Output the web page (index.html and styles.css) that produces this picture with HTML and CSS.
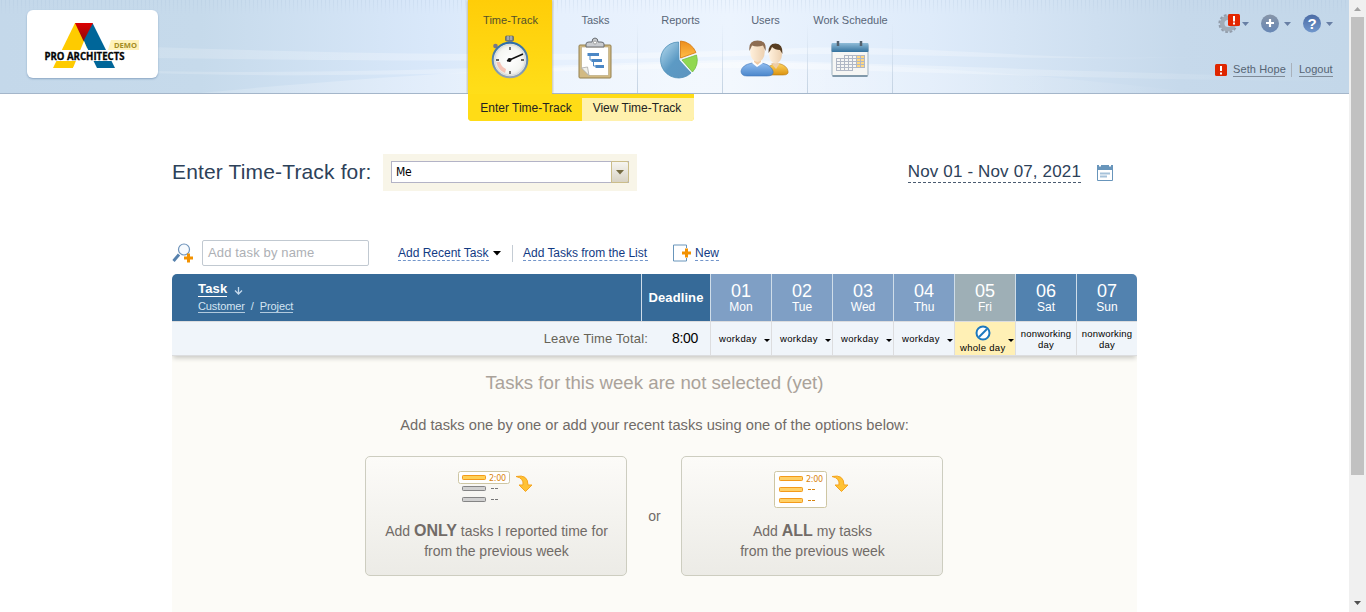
FILE: index.html
```html
<!DOCTYPE html>
<html lang="en">
<head>
<meta charset="utf-8">
<title>Enter Time-Track</title>
<link rel="stylesheet" href="styles.css">
</head>
<body>
<div class="window">
<div class="page">
  <header class="top">
    <svg class="waves" width="1349" height="93" viewBox="0 0 1349 93" preserveAspectRatio="none">
      <defs>
        <linearGradient id="glow"><stop offset="0" stop-color="#fff" stop-opacity=".15"/><stop offset=".5" stop-color="#fff" stop-opacity=".4"/><stop offset="1" stop-color="#fff" stop-opacity="0"/></linearGradient>
        <pattern id="pin" width="4" height="14" patternUnits="userSpaceOnUse"><path d="M1.500 0v14" stroke="#9fb9d6" stroke-opacity=".2"/></pattern>
        <linearGradient id="pinfade" x2="0" y2="1"><stop offset="0" stop-color="#fff"/><stop offset="1" stop-color="#000"/></linearGradient>
        <mask id="pm"><rect width="1349" height="14" fill="url(#pinfade)"/></mask>
      </defs>
      <rect width="1349" height="14" fill="url(#pin)" mask="url(#pm)"/>
      <path d="M150 47C350 54 560 58 800 48C960 44 1080 70 1310 50C1120 66 980 54 800 54C540 64 330 60 150 58Z" fill="url(#glow)"/>
      <path d="M150 71C380 76 600 62 740 60C900 64 1080 72 1349 78V81C1080 80 900 70 740 68C590 68 380 80 150 73Z" fill="url(#glow)"/>
      <path d="M200 93C380 76 540 66 740 62C900 64 1040 74 1200 93Z" fill="url(#glow)"/>
    </svg>
    <div class="logo">
      <svg width="131" height="68" viewBox="0 0 131 68">
        <defs><linearGradient id="red" x2="0" y2="1"><stop offset="0" stop-color="#d00"/><stop offset="1" stop-color="#8b0b0b"/></linearGradient></defs>
        <path d="M48 13H57L65.500 30L46 58H26Z" fill="#fecb00"/>
        <path d="M56 29.500L65.500 13L88 58H70Z" fill="#006699"/>
        <path d="M48 13H66L56.500 31Z" fill="url(#red)"/>
        <path d="M57 31L68 58H46Z" fill="#fff"/>
        <rect x="16" y="40" width="100" height="11" fill="#fff"/>
        <path d="M84 30H112V40H81Z" fill="#fff2ba"/>
        <text x="87" y="38" class="logo-demo" textLength="23" lengthAdjust="spacingAndGlyphs">DEMO</text>
        <text x="17.500" y="49.500" class="logo-name" textLength="80" lengthAdjust="spacingAndGlyphs">PRO ARCHITECTS</text>
      </svg>
    </div>
    <nav class="nav">
      <a class="nav-item active"><span>Time-Track</span>
        <svg width="44" height="48" viewBox="0 0 44 48">
          <defs><radialGradient id="face"><stop offset="0" stop-color="#fff"/><stop offset=".7" stop-color="#f5f6f3"/><stop offset="1" stop-color="#dcded8"/></radialGradient>
          <linearGradient id="rim" x2="0" y2="1"><stop offset="0" stop-color="#2e6da8"/><stop offset="1" stop-color="#91a2b3"/></linearGradient></defs>
          <rect x="19.500" y="6" width="5" height="6" fill="#888f96"/><rect x="17.500" y="3" width="8" height="5" rx="1" fill="#7c848c" stroke="#565e66" stroke-width=".7"/><path d="M20 3v4M23 3v4" stroke="#c8cdd1"/>
          <circle cx="7.500" cy="13" r="2.300" fill="#778"/><path d="M8 14l3 3" stroke="#777" stroke-width="2"/>
          <circle cx="22" cy="27" r="17.300" fill="url(#face)" stroke="url(#rim)" stroke-width="2"/>
          <circle cx="22" cy="27" r="15.500" fill="none" stroke="#d7dadc" stroke-width="1"/>
          <path d="M8.500 29A14 14 0 0 0 17 40L18 36A10 10 0 0 1 12 29Z" fill="#f5c3b5"/>
          <path d="M22 14v3M22 38v3M8 27h3M33 27h3" stroke="#333" stroke-width="1.300"/>
          <path d="M19 28L35 21" stroke="#111" stroke-width="1.600"/><circle cx="21.500" cy="27" r="2" fill="#111"/>
        </svg></a>
      <a class="nav-item"><span>Tasks</span>
        <svg width="44" height="48" viewBox="0 0 44 48">
          <rect x="6" y="12" width="32" height="33" rx="1" fill="#d2ba83" stroke="#94804f"/>
          <path d="M8.500 14H35.500V42.500H16L8.500 35Z" fill="#fff" stroke="#b4a375" stroke-width=".6"/><path d="M8.500 35L14.500 34L16 42.500Z" fill="#f1f1eb" stroke="#aaa" stroke-width=".8"/>
          <path d="M13 14v-3q0-2 3-2h3q0-4 3-4t3 4h3q3 0 3 2v3Z" fill="#c9ccd0" stroke="#686d73" stroke-width="1"/><circle cx="22" cy="9.500" r="1.500" fill="#fff" stroke="#777" stroke-width=".6"/>
          <path d="M14.500 21.500H26M18.500 27.500H29M22.500 33.500H31" stroke="#4b87c5" stroke-width="3"/><path d="M17 22v5h3M20.500 28v5h3" stroke="#4b87c5" fill="none"/>
        </svg></a>
      <a class="nav-item"><span>Reports</span>
        <svg width="44" height="48" viewBox="0 0 44 48">
          <defs><linearGradient id="pb" x2="1" y2="1"><stop offset="0" stop-color="#b8dcef"/><stop offset=".5" stop-color="#5c9ac4"/><stop offset="1" stop-color="#5d94bf"/></linearGradient><linearGradient id="po" x2="0" y2="1"><stop offset="0" stop-color="#ed8e1d"/><stop offset="1" stop-color="#ffbd47"/></linearGradient></defs>
          <path d="M20.500 9A18 18 0 1 0 33 40L21 27Z" fill="url(#pb)" stroke="#4f8fb8" stroke-width=".8"/>
          <path d="M22.500 8A18 18 0 0 1 38 19.500L22.500 25Z" fill="url(#po)" stroke="#d37509" stroke-width=".8"/>
          <path d="M24 27L38.500 22A18 18 0 0 1 34.500 39Z" fill="#91d850" stroke="#74bd40" stroke-width=".8"/>
        </svg></a>
      <a class="nav-item"><span>Users</span>
        <svg width="50" height="48" viewBox="0 0 50 48">
          <defs><linearGradient id="ub" x2="0" y2="1"><stop offset="0" stop-color="#91bdf0"/><stop offset="1" stop-color="#4a86cb"/></linearGradient><linearGradient id="uy" x2="0" y2="1"><stop offset="0" stop-color="#ffd360"/><stop offset="1" stop-color="#db930f"/></linearGradient><linearGradient id="skin"><stop offset="0" stop-color="#fff0dc"/><stop offset="1" stop-color="#ecd0b0"/></linearGradient></defs>
          <path d="M28 42V34q4-2 6-3.500h5q8 2 9 7.500q1 4-5 4H28Z" fill="url(#uy)" stroke="#b77a13" stroke-width=".6"/>
          <path d="M31 30l5 6 4-6Z" fill="#edcda8"/>
          <ellipse cx="35.500" cy="21" rx="6.500" ry="9.500" fill="url(#skin)"/>
          <path d="M28.500 20Q28 10.500 35.500 10.500Q43 10.500 42.500 21L40 17Q35 17 32 14Q31 17 28.500 20Z" fill="#573d22"/>
          <path d="M1 38q1-6 11-8h10q9 2 11 8q1 5-6 5H7q-6 0-6-5Z" fill="url(#ub)" stroke="#3f76b8" stroke-width=".6"/>
          <path d="M12 30l2-3h7l2 3-6 4Z" fill="#fff"/><path d="M14 25v4l3.500 3 3.500-3v-4" fill="#f0cba5"/>
          <ellipse cx="17.500" cy="18.500" rx="7.300" ry="10.500" fill="url(#skin)"/>
          <path d="M9.500 18Q8 7.500 17.500 7.500Q27 7.500 25.500 18L23 12.500Q17 14.500 12 12.500Z" fill="#8d6d52"/>
        </svg></a>
      <a class="nav-item"><span>Work Schedule</span>
        <svg width="44" height="48" viewBox="0 0 44 48">
          <defs><linearGradient id="ch" x2="0" y2="1"><stop offset="0" stop-color="#8fbcd8"/><stop offset="1" stop-color="#34729e"/></linearGradient></defs>
          <rect x="4" y="11" width="36" height="32" rx="1.500" fill="#f6f6f4" stroke="#9fb1bf"/><rect x="3.500" y="10" width="37" height="9" rx="1" fill="url(#ch)"/><path d="M4.500 43H39.500" stroke="#8199aa" stroke-width="2"/>
          <path d="M10 8v5M33 8v5" stroke="#53616e" stroke-width="2.500"/>
          <rect x="28.500" y="22.500" width="8" height="12" fill="#ffd781"/>
          <path d="M16 22.500H36.500M8 25.500H36.500M8 28.500H36.500M8 31.500H36.500M8 34.500H36.500M8 37.500H24M8.500 26v12M12.500 26v12M16.500 22v16M20.500 22v16M24.500 22v16M28.500 22v13M32.500 22v13M36.500 22v13" fill="none" stroke="#b0b7c5"/>
        </svg></a>
    </nav>
    <div class="account">
      <div class="tools">
        <svg width="31" height="22" viewBox="0 0 31 22">
          <circle cx="10" cy="12.500" r="8.500" fill="none" stroke="#929caa" stroke-width="2.200" stroke-dasharray="2.700 1.750"/><circle cx="10" cy="12.500" r="5.800" fill="none" stroke="#a0abb7" stroke-width="4.500"/>
          <rect x="10" y="3" width="12" height="12" rx="1.500" fill="#e32600"/><path d="M16 5v5.500M16 11.500v2" stroke="#fff" stroke-width="2"/><path d="M24 11h7l-3.500 4Z" fill="#687fa5"/>
        </svg>
        <svg width="31" height="22" viewBox="0 0 31 22"><defs><linearGradient id="pl" x2="0" y2="1"><stop offset="0" stop-color="#8795a8"/><stop offset="1" stop-color="#6787b5"/></linearGradient></defs><circle cx="10" cy="12.500" r="9" fill="url(#pl)"/><path d="M10 8v8M6 12h8" stroke="#fff" stroke-width="2.200"/><path d="M24 11h7l-3.500 4Z" fill="#687fa5"/></svg>
        <svg width="31" height="22" viewBox="0 0 31 22"><defs><linearGradient id="hl" x2="0" y2="1"><stop offset="0" stop-color="#4c6ca5"/><stop offset="1" stop-color="#6f96cc"/></linearGradient></defs><circle cx="10" cy="12.500" r="9" fill="url(#hl)"/><text x="10" y="17.500" class="help">?</text><path d="M24 11h7l-3.500 4Z" fill="#687fa5"/></svg>
      </div>
      <div class="user">
        <svg width="12" height="12" viewBox="0 0 12 12"><rect width="12" height="12" rx="1.500" fill="#df2600"/><path d="M6 2v5M6 8.500v2" stroke="#fff" stroke-width="2"/></svg>
        <a class="u-name">Seth Hope</a><i class="u-sep"></i><a class="u-out">Logout</a>
      </div>
    </div>
  </header>
  <div class="subnav"><a class="sub on">Enter Time-Track</a><a class="sub">View Time-Track</a></div>

  <main class="content">
    <div class="title-row">
      <h1><span class="h1-text">Enter Time-Track for:</span></h1>
      <div class="who"><div class="combo"><span>Me</span><b><svg width="8" height="5" viewBox="0 0 8 5"><path d="M0 0h8L4 4.500Z" fill="#756b43"/></svg></b></div></div>
      <div class="range"><span class="dates">Nov 01 - Nov 07, 2021</span>
        <svg width="16" height="18" viewBox="0 0 16 18"><path d="M.5 2v14.500h15V2" fill="#fff" stroke="#6895bb"/><path d="M0 1h2v1.500h2V1h8v1.500h2V1h2v5H0Z" fill="#6895bb"/><path d="M3 9.500h10M3 12.500h7" stroke="#a6c2da" stroke-width="2"/></svg>
      </div>
    </div>

    <div class="toolbar">
      <svg width="21" height="20" viewBox="0 0 21 20"><path d="M1.500 18L7 11.500" stroke="#5681ad" stroke-width="3"/><circle cx="12" cy="6.500" r="5.500" fill="#f6fafe" stroke="#6e93ba" stroke-width="1.200"/><path d="M16.500 10.500v9M12 15h9" stroke="#f39200" stroke-width="3"/></svg>
      <div class="search">Add task by name</div>
      <a class="dash l1">Add Recent Task</a>
      <svg class="caret" width="8" height="5" viewBox="0 0 8 5"><path d="M0 0h8L4 4.500Z" fill="#000"/></svg>
      <i class="sep"></i>
      <a class="dash l2">Add Tasks from the List</a>
      <svg class="new-ico" width="19" height="18" viewBox="0 0 19 18"><path d="M13.500 4V1H.5v16h13v-3" fill="none" stroke="#6895bb"/><path d="M13.500 4.500v9M9 9h9" stroke="#f39200" stroke-width="3"/></svg>
      <a class="dash l3">New</a>
    </div>

    <section class="grid">
      <div class="hd task"><div class="t1"><b>Task</b><svg width="9" height="9" viewBox="0 0 9 9"><path d="M4.500 1v7M1 4.500L4.500 8L8 4.500" fill="none" stroke="#c5d9ec" stroke-width="1.300"/></svg></div><div class="t2"><u>Customer</u><i>/</i><u>Project</u></div></div>
      <div class="hd deadline"><span>Deadline</span></div>
      <div class="hd day"><b>01</b><span>Mon</span></div>
      <div class="hd day"><b>02</b><span>Tue</span></div>
      <div class="hd day"><b>03</b><span>Wed</span></div>
      <div class="hd day"><b>04</b><span>Thu</span></div>
      <div class="hd day fri"><b>05</b><span>Fri</span></div>
      <div class="hd day off"><b>06</b><span>Sat</span></div>
      <div class="hd day off last"><b>07</b><span>Sun</span></div>
      <div class="lv total">Leave Time Total:</div>
      <div class="lv hours">8:00</div>
      <div class="lv work"><span>workday</span><i></i></div>
      <div class="lv work"><span>workday</span><i></i></div>
      <div class="lv work"><span>workday</span><i></i></div>
      <div class="lv work"><span>workday</span><i></i></div>
      <div class="lv whole"><div><svg width="16" height="16" viewBox="0 0 16 16"><circle cx="8" cy="8" r="6.500" fill="#fff" stroke="#1c78be" stroke-width="2"/><path d="M4 12L12 4" stroke="#1c78be" stroke-width="2"/></svg><span>whole day</span></div><i></i></div>
      <div class="lv non"><span>nonworking</span><span>day</span></div>
      <div class="lv non"><span>nonworking</span><span>day</span></div>
    </section>

    <section class="empty">
      <h2><span>Tasks for this week are not selected (yet)</span></h2>
      <p class="hint"><span>Add tasks one by one or add your recent tasks using one of the options below:</span></p>
      <div class="options">
        <a class="card">
          <svg width="76" height="38" viewBox="0 0 76 38"><rect x=".5" y=".5" width="51" height="12" rx="2" fill="#fff" stroke="#cec6a3"/><rect x="4.500" y="4.500" width="23" height="4" rx=".8" fill="#ffd056" stroke="#f39a1a"/><g fill="#d0d0d0" stroke="#858585"><rect x="4.500" y="15.500" width="23" height="4" rx=".8"/><rect x="4.500" y="26.500" width="23" height="4" rx=".8"/></g><text x="31" y="9.500" class="mini" textLength="17">2:00</text><path d="M33 17.500h3m1 0h3M33 28.500h3m1 0h3" stroke="#777"/><path d="M58 5.500Q70 3 70 14H74L67.500 20.500L61 14H65Q66 7 58 5.500Z" fill="#ffc235" stroke="#f5a51f"/></svg>
          <div class="card-text"><span class="c1">Add <b>ONLY</b> tasks I reported time for</span><span class="c2">from the previous week</span></div>
        </a>
        <span class="or">or</span>
        <a class="card">
          <svg width="76" height="38" viewBox="0 0 76 38"><rect x=".5" y=".5" width="52" height="36" rx="2" fill="#fff" stroke="#cec6a3"/><g fill="#ffd066" stroke="#f39a1a"><rect x="5.500" y="5.500" width="23" height="4" rx=".8"/><rect x="5.500" y="16.500" width="23" height="4" rx=".8"/><rect x="5.500" y="27.500" width="23" height="4" rx=".8"/></g><text x="32" y="10.500" class="mini" textLength="17">2:00</text><path d="M34 18.500h3m1 0h3M34 29.500h3m1 0h3" stroke="#d98510"/><path d="M58 5.500Q70 3 70 14H74L67.500 20.500L61 14H65Q66 7 58 5.500Z" fill="#ffc235" stroke="#f5a51f"/></svg>
          <div class="card-text"><span class="c3">Add <b>ALL</b> my tasks</span><span class="c2">from the previous week</span></div>
        </a>
      </div>
    </section>
  </main>
</div>
<div class="scroll"><svg width="17" height="17" viewBox="0 0 17 17"><path d="M5 11h7L8.500 7Z" fill="#a3a3a3"/></svg><div class="thumb"></div><svg width="17" height="17" viewBox="0 0 17 17"><path d="M5 6h7L8.500 10Z" fill="#505050"/></svg></div>
</div>
</body>
</html>
```
FILE: styles.css
```css
* { box-sizing: border-box; }
body { margin: 0; background: #fff; font-family: "Liberation Sans", Arial, sans-serif; font-size: 12px; color: #000; overflow: hidden; }
h1, h2, p { margin: 0; font-weight: normal; }
i { font-style: normal; }
svg { display: block; flex: none; }
span { white-space: nowrap; }
.window { display: flex; width: 1366px; height: 612px; }
.page { width: 1349px; height: 612px; overflow: hidden; }

.top { position: relative; display: flex; height: 94px; border-bottom: 1px solid #a4b6ca; background: linear-gradient(90deg, #c4d8ea 0, #c6daeb 200px, #d9e8fa 430px, #e6f0fd 560px, #ecf4fe 730px, #deebfa 930px, #c6d9eb 1180px, #c3d7e9 100%); }
.waves { position: absolute; left: 0; top: 0; }
.logo { position: relative; width: 131px; height: 68px; margin: 10px 310px 0 27px; background: #fff; border-radius: 6px; box-shadow: 0 1px 2px #8ba6c3; }
.logo-name { font: bold 10.500px "Open Sans", sans-serif; fill: #050505; stroke: #050505; stroke-width: .3px; }
.logo-demo { font: bold 7px "Open Sans", sans-serif; fill: #a58d24; }
.nav { position: relative; display: flex; }
.nav-item { width: 85px; height: 93px; padding-top: 14px; display: flex; flex-direction: column; align-items: center; font-size: 11px; line-height: 13px; color: #596678; border-right: 1px solid; border-image: linear-gradient(transparent 25%, #c3d2e2) 1; }
.nav-item svg { margin-top: 6px; }
.nav-item span { padding-left: 1px; }
.nav-item.active { width: 84px; margin-right: 1px; height: 94px; border: 0; background: linear-gradient(#ffcd08, #ffde19); box-shadow: 0 0 3px #a59b72; clip-path: inset(0 -2px 0 -2px); color: #53502a; }
.account { position: relative; flex: 1; padding: 11px 16px 0 0; display: flex; flex-direction: column; align-items: flex-end; }
.tools { display: flex; gap: 11px; }
.help { font: bold 15px "Liberation Sans", sans-serif; fill: #fff; text-anchor: middle; }
.user { display: flex; align-items: center; margin-top: 30px; color: #566474; line-height: 13px; white-space: nowrap; }
.user a { height: 14px; border-bottom: 1px solid #7f8b98; font-size: 11px; }
.u-name { margin-left: 6px; width: 52px; letter-spacing: .1px; }
.u-sep { width: 1px; height: 14px; margin: 0 7px 0 6px; background: #a9b1bb; }
.u-out { width: 34px; }

.subnav { display: flex; width: 226px; height: 27px; margin-left: 468px; background: #ffdc16; border-radius: 0 0 4px 4px; overflow: hidden; }
.sub { flex: 1; margin-top: 4px; height: 23px; line-height: 20px; padding-right: 2px; text-align: center; background: #fff1ad; color: #222; }
.sub.on { flex: 0 0 114px; padding: 0 0 0 2px; background: #ffdc16; }

.content { width: 965px; margin-left: 172px; }
.title-row { display: flex; align-items: flex-start; padding-top: 33px; height: 119px; }
h1 { width: 211px; font-size: 21px; line-height: 35px; color: #2d4159; }
.h1-text { letter-spacing: .15px; }
.who { width: 254px; height: 37px; padding: 7px 8px; background: #f8f5e8; }
.combo { display: flex; height: 22px; border: 1px solid #b3b3c6; background: #fff; }
.combo span { flex: 1; padding-left: 4px; font: 12px/21px "DejaVu Sans Condensed", "DejaVu Sans", sans-serif; font-stretch: condensed; letter-spacing: -.2px; }
.combo b { width: 18px; margin: -1px; display: flex; align-items: center; justify-content: center; border: 1px solid #cbbd8a; border-radius: 0 2px 2px 0; background: linear-gradient(#f6f5f1, #d8d3c4); }
.range { margin-left: auto; padding: 8px 24px 0 0; display: flex; }
.dates { height: 21px; font-size: 17px; line-height: 20px; color: #2d4159; border-bottom: 1px dashed #4a5b70; letter-spacing: .15px; margin-right: 16px; }
.range svg { margin-top: 2px; }

.toolbar { display: flex; align-items: center; height: 26px; margin-bottom: 8px; }
.search { width: 167px; height: 26px; margin-left: 9px; border: 1px solid #c1c9d1; border-radius: 2px; padding-left: 5px; font-size: 13px; line-height: 24px; letter-spacing: .15px; color: #adb0b5; white-space: nowrap; }
.dash { color: #123a83; border-bottom: 1px dashed #7295ca; line-height: 16px; height: 16px; white-space: nowrap; }
.l1 { width: 91px; margin-left: 29px; }
.caret { margin: 1px 0 0 4px; }
.sep { width: 1px; height: 17px; margin: 0 10px 0 11px; background: #c4ccd4; }
.l2 { width: 125px; letter-spacing: -.02px; }
.new-ico { margin: 0 3px 0 25px; }

.grid { position: relative; display: grid; grid-template-columns: 469px 69px repeat(7, 61px); grid-template-rows: 47px 35px; border-radius: 5px 5px 0 0; box-shadow: 0 3px 5px -1px #c8c8c2; clip-path: inset(0 0 -8px 0); }
.hd { color: #fff; background: #366a98; }
.hd + .hd { border-left: 1px solid #cfdde9; }
.task { padding: 6px 0 0 26px; border-radius: 5px 0 0 0; }
.t1 { display: flex; align-items: center; font-size: 13px; }
.t1 b { line-height: 17px; height: 17px; width: 29px; border-bottom: 1px solid #fff; letter-spacing: .2px; }
.t1 svg { margin: 3px 0 0 7px; }
.t2 { margin-top: 3px; display: flex; font-size: 11px; line-height: 12px; color: #d4e4f2; }
.t2 u { text-decoration: none; border-bottom: 1px solid #b2cade; letter-spacing: -.12px; }
.t2 i { margin: 0 6px; }
.deadline { font-weight: bold; font-size: 13px; line-height: 47px; text-align: center; letter-spacing: .1px; }
.day { display: flex; flex-direction: column; align-items: center; background: #7f9fc5; padding-top: 7px; }
.day b { font-size: 18px; line-height: 20px; font-weight: normal; }
.day span { font-size: 12px; line-height: 13px; }
.day.fri { background: #9eafb6; }
.day.off { background: #5282af; }
.day.last { border-radius: 0 5px 0 0; }
.lv { background: #f0f5fa; border: solid #dcdddf; border-width: 1px 0 1px 1px; font-size: 10px; }
.lv.total { margin-right: -7px; border-left: 0; text-align: right; font-size: 13px; line-height: 33px; color: #666357; letter-spacing: .16px; white-space: nowrap; }
.lv.hours { margin-left: 7px; border-left: 0; padding-right: 12px; text-align: right; font-size: 14px; line-height: 33px; letter-spacing: -.3px; }
.work, .whole { position: relative; padding: 11px 0 0 8px; line-height: 12px; }
.work span, .whole span, .non span { font-size: 9.500px; letter-spacing: .18px; }
.work span { letter-spacing: .35px; }
.work i, .whole i { position: absolute; right: 1px; top: 17px; border: solid transparent; border-width: 3px 3px 0; border-top-color: #000; }
.lv.whole { background: #fff0b5; padding: 2px 0 0 5px; }
.whole svg { margin-left: 15px; margin-top: 1px; }
.whole span { display: block; line-height: 11px; margin-top: 1px; letter-spacing: .3px; }
.lv.non { padding-top: 6px; display: flex; flex-direction: column; align-items: center; line-height: 11px; }

.empty { height: 256px; padding-top: 15px; background: #fcfbf7; text-align: center; }
h2 { font-size: 18.660px; line-height: 24px; color: #aaa29a; }
.hint { margin-top: 20px; font-size: 14.660px; line-height: 20px; color: #716b67; }
.options { display: flex; margin: 21px 0 0 193px; }
.card { width: 262px; height: 120px; padding-top: 14px; display: flex; flex-direction: column; align-items: center; border: 1px solid #cdcdc0; border-radius: 5px; background: linear-gradient(#fcfbf8, #ecebe6); }
.card-text { display: flex; flex-direction: column; align-items: center; margin-top: 12px; padding-left: 1px; font-size: 14px; line-height: 20px; color: #716b67; }
.card b { font-size: 16px; line-height: 18px; }
.mini { font: 8px "DejaVu Sans", sans-serif; fill: #d98510; }
.or { width: 54px; padding-left: 1px; line-height: 120px; font-size: 14px; color: #716b67; }

.scroll { width: 17px; background: #f0f0f0; display: flex; flex-direction: column; }
.thumb { height: 458px; margin: 0 2px auto; background: #c1c1c1; }
```
